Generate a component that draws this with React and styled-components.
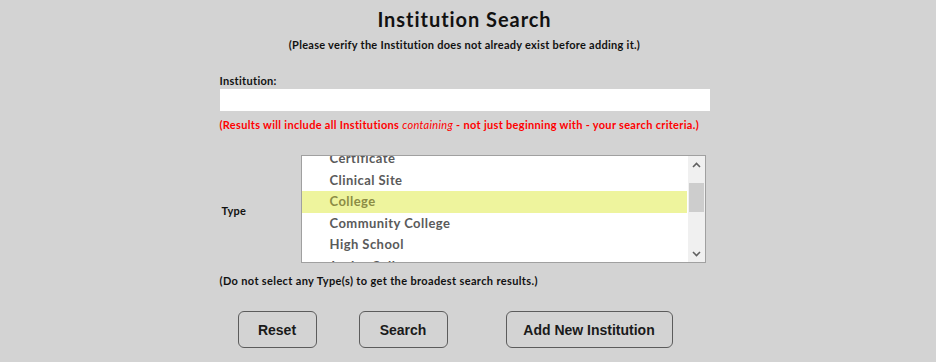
import React, { useEffect, useRef } from "react";
import styled, { createGlobalStyle } from "styled-components";

const GlobalStyle = createGlobalStyle`
  body {
    margin: 0;
    background: #d3d3d3;
    font-family: "Lato", "DejaVu Sans", sans-serif;
  }
`;

const types = [
  "Academy",
  "Bible College",
  "Certificate",
  "Clinical Site",
  "College",
  "Community College",
  "High School",
  "Junior College",
  "Seminary",
  "Technical School",
  "University",
];

const App = () => {
  const listRef = useRef(null);

  useEffect(() => {
    // scrolled so that "Certificate" is cut at the top
    if (listRef.current) listRef.current.scrollTop = 51;
  }, []);

  return (
    <Page>
      <GlobalStyle />
      <Title>Institution Search</Title>
      <Subtitle>(Please verify the Institution does not already exist before adding it.)</Subtitle>

      <Form>
        <Label>Institution:</Label>
        <Input type="text" />
        <Warning>
          (Results will include all Institutions <em>containing</em> - not just beginning with - your search criteria.)
        </Warning>

        <TypeRow>
          <TypeLabel>Type</TypeLabel>
          <ListBox>
            <Items ref={listRef}>
              {types.map((t) => (
                <Item key={t} selected={t === "College"}>
                  {t}
                </Item>
              ))}
            </Items>
            <Scrollbar>
              <Arrow>
                <svg width="9" height="6" viewBox="0 0 9 6">
                  <path d="M1 5 L4.5 1.5 L8 5" fill="none" stroke="#606060" strokeWidth="1.6" />
                </svg>
              </Arrow>
              <Track>
                <Thumb />
              </Track>
              <Arrow>
                <svg width="9" height="6" viewBox="0 0 9 6">
                  <path d="M1 1 L4.5 4.5 L8 1" fill="none" stroke="#606060" strokeWidth="1.6" />
                </svg>
              </Arrow>
            </Scrollbar>
          </ListBox>
        </TypeRow>

        <Hint>(Do not select any Type(s) to get the broadest search results.)</Hint>

        <Buttons>
          <Button w={79}>Reset</Button>
          <Button w={89}>Search</Button>
          <Button w={167}>Add New Institution</Button>
        </Buttons>
      </Form>
    </Page>
  );
};

const Page = styled.div`
  display: flex;
  flex-direction: column;
  align-items: center;
  padding-top: 6px;
  margin-left: -7px;
`;

const Title = styled.h1`
  margin: 0;
  font-size: 20px;
  font-weight: 700;
  letter-spacing: 0.95px;
  color: #111;
  line-height: 26px;
`;

const Subtitle = styled.div`
  margin-top: 6px;
  font-size: 11px;
  font-weight: 700;
  letter-spacing: 0.27px;
  color: #111;
  line-height: 14px;
`;

const Form = styled.div`
  width: 490px;
  margin-top: 22px;
  display: flex;
  flex-direction: column;
`;

const Label = styled.div`
  font-size: 11px;
  font-weight: 700;
  letter-spacing: 0.3px;
  color: #111;
  line-height: 14px;
`;

const TypeLabel = styled(Label)`
  padding-left: 2px;
  margin-top: 4px;
`;

const Input = styled.input`
  margin-top: 1px;
  height: 22px;
  border: none;
  background: #fff;
  padding: 0 4px;
  box-sizing: border-box;
  outline: none;
`;

const Warning = styled.div`
  margin-top: 7px;
  font-size: 11px;
  font-weight: 700;
  letter-spacing: 0.31px;
  color: #ff0000;
  line-height: 14px;

  em {
    font-weight: 400;
    font-style: italic;
  }
`;

const TypeRow = styled.div`
  margin-top: 23px;
  display: grid;
  grid-template-columns: 81px 405px;
  align-items: center;
`;

const ListBox = styled.div`
  height: 108px;
  box-sizing: border-box;
  border: 1px solid #a0a0a0;
  background: #fff;
  display: flex;
`;

const Items = styled.div`
  flex: 1;
  overflow: hidden;
`;

const Item = styled.div`
  height: 21.5px;
  line-height: 21.5px;
  padding-left: 28px;
  font-size: 13px;
  font-weight: 700;
  letter-spacing: 0.45px;
  color: ${(p) => (p.selected ? "#8c8c45" : "#5a5a5a")};
  background: ${(p) => (p.selected ? "#eef49d" : "transparent")};
  margin-right: ${(p) => (p.selected ? "1px" : "0")};
`;

const Scrollbar = styled.div`
  width: 17px;
  background: #f0f0f0;
  display: flex;
  flex-direction: column;
`;

const Arrow = styled.div`
  height: 17px;
  display: flex;
  align-items: center;
  justify-content: center;
`;

const Track = styled.div`
  flex: 1;
  padding-top: 10px;
`;

const Thumb = styled.div`
  margin: 0 1px;
  height: 29px;
  background: #cdcdcd;
`;

const Hint = styled.div`
  margin-top: 11px;
  font-size: 11px;
  font-weight: 700;
  letter-spacing: 0.36px;
  color: #111;
  line-height: 14px;
`;

const Buttons = styled.div`
  margin-top: 23px;
  padding-left: 18px;
  display: flex;
  gap: 42px;

  & > :last-child {
    margin-left: 16px;
  }
`;

const Button = styled.button`
  width: ${(p) => p.w}px;
  height: 37px;
  border: 1px solid #5c5c5c;
  border-radius: 6px;
  background: #d3d3d3;
  font-family: "Liberation Sans", Arial, sans-serif;
  font-size: 14px;
  font-weight: 700;
  color: #1a1a1a;
  cursor: pointer;
`;

export default App;
